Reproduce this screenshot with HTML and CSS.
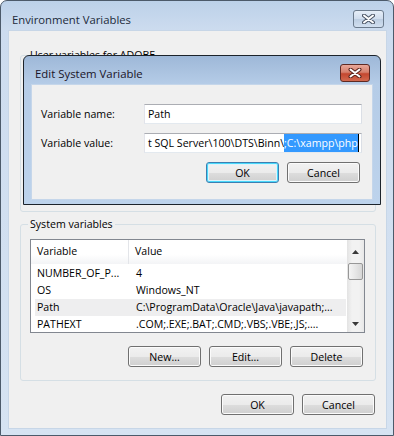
FILE: index.html
```html
<!DOCTYPE html>
<html lang="en">
<head>
  <meta charset="UTF-8">
  <title>Environment Variables</title>
  <link rel="stylesheet" href="styles.css">
</head>
<body>
  <div class="window">
    <div class="titlebar">
      <span class="title">Environment Variables</span>
      <span class="close">
        <svg width="13" height="10" viewBox="0 0 13 10"><path d="M2 1.5 L11 8.5 M11 1.5 L2 8.5" stroke="#4b5566" stroke-width="4" stroke-linecap="round"/><path d="M2 1.5 L11 8.5 M11 1.5 L2 8.5" stroke="#fff" stroke-width="2" stroke-linecap="round"/></svg>
      </span>
    </div>

    <div class="client">
      <div class="group user">
        <div class="group-label">User variables for ADOBE</div>
      </div>

      <div class="group system">
        <div class="group-label">System variables</div>
        <div class="list">
          <div class="table">
            <div class="head">
              <div class="hcell first">Variable</div>
              <div class="hcell">Value</div>
            </div>
            <div class="row"><span>NUMBER_OF_P...</span><span>4</span></div>
            <div class="row"><span>OS</span><span>Windows_NT</span></div>
            <div class="row sel"><span>Path</span><span>C:\ProgramData\Oracle\Java\javapath;...</span></div>
            <div class="row"><span>PATHEXT</span><span>.COM;.EXE;.BAT;.CMD;.VBS;.VBE;.JS;....</span></div>
          </div>
          <div class="scrollbar">
            <div class="arrow"><svg width="7" height="4" viewBox="0 0 7 4"><path d="M0 4 L3.5 0 L7 4 Z" fill="#3a3a3a"/></svg></div>
            <div class="thumb"></div>
            <div class="track"></div>
            <div class="arrow"><svg width="7" height="4" viewBox="0 0 7 4"><path d="M0 0 L7 0 L3.5 4 Z" fill="#3a3a3a"/></svg></div>
          </div>
        </div>
        <div class="buttons">
          <button class="btn">New...</button>
          <button class="btn">Edit...</button>
          <button class="btn">Delete</button>
        </div>
      </div>

      <div class="buttons bottom">
        <button class="btn">OK</button>
        <button class="btn">Cancel</button>
      </div>
    </div>

    <div class="dialog">
      <div class="dtitlebar">
        <span class="dtitle">Edit System Variable</span>
        <span class="dclose">
          <svg width="14" height="10" viewBox="0 0 14 10"><path d="M2.5 1.5 L11.5 8.5 M11.5 1.5 L2.5 8.5" stroke="#5a231b" stroke-width="4" stroke-linecap="round"/><path d="M2.5 1.5 L11.5 8.5 M11.5 1.5 L2.5 8.5" stroke="#fff" stroke-width="2" stroke-linecap="round"/></svg>
        </span>
      </div>
      <div class="dclient">
        <div class="field">
          <label>Variable name:</label>
          <div class="input">Path</div>
        </div>
        <div class="field">
          <label>Variable value:</label>
          <div class="input"><span>t SQL Server\100\DTS\Binn\</span><span class="selected">;C:\xampp\php</span><span class="caret"></span></div>
        </div>
        <div class="buttons dbuttons">
          <button class="btn default">OK</button>
          <button class="btn">Cancel</button>
        </div>
      </div>
    </div>
  </div>
</body>
</html>
```

FILE: styles.css
```css
* {
  box-sizing: border-box;
}

body {
  margin: 0;
  font-family: "Open Sans", "Noto Sans", sans-serif;
  font-size: 10.6px;
  color: #000;
  background: #fff;
}

.window {
  position: relative;
  width: 394px;
  height: 436px;
  border: 1px solid #4c5a6a;
  border-radius: 7px 7px 0 0;
  background: linear-gradient(#bcd1e9 0, #cddcef 30px, #d6e3f2 100%);
  padding: 0 6px 6px 7px;
  display: flex;
  flex-direction: column;
}

.titlebar {
  height: 29px;
  margin: 0 -6px 0 -7px;
  padding: 9px 9px 0 11px;
  display: flex;
  justify-content: space-between;
  align-items: flex-start;
}

.title {
  font-size: 11.3px;
  color: #1c2a3a;
  line-height: 19px;
}

.close {
  width: 31px;
  height: 18px;
  border: 1px solid #6b7a8c;
  border-radius: 3px;
  background: linear-gradient(#e6eef8, #cfdced 50%, #bccde2 51%, #d2e0f0);
  display: flex;
  align-items: center;
  justify-content: center;
}

.client {
  flex: 1;
  background: #f0f0f0;
  border: 1px solid #c7d6e7;
  padding: 0 10px 0 11px;
  display: flex;
  flex-direction: column;
}

.group {
  border: 1px solid #d5dfe5;
  border-radius: 3px;
  padding: 0 10px 13px 9px;
}

.group.user {
  margin-top: 24px;
  height: 157px;
}

.group.system {
  margin-top: 12px;
}

.group-label {
  width: fit-content;
  margin: -9px 0 0 -2px;
  padding: 0 2px;
  line-height: 16px;
  background: #f0f0f0;
}

.list {
  margin-top: 7px;
  height: 94px;
  border: 1px solid #828790;
  background: #fff;
  display: flex;
}

.table {
  flex: 1;
  overflow: hidden;
}

.head {
  height: 24px;
  display: flex;
  background: linear-gradient(#fff 60%, #f3f4f6);
}

.hcell {
  padding-left: 6px;
  line-height: 23px;
}

.hcell.first {
  width: 98px;
  border-right: 1px solid #e3e5e9;
}

.row {
  height: 17px;
  margin: 0 1px 0 4px;
  padding-left: 2px;
  display: grid;
  grid-template-columns: 99px 1fr;
  line-height: 17px;
  white-space: nowrap;
}

.row:nth-of-type(2) {
  margin-top: 1px;
}

.row.sel {
  background: #eeeeef;
}

.scrollbar {
  width: 17px;
  display: flex;
  flex-direction: column;
  background: linear-gradient(90deg, #e3e3e3, #f2f2f2 30%, #f2f2f2 70%, #e8e8e8);
}

.arrow {
  height: 23px;
  display: flex;
  align-items: center;
  justify-content: center;
}

.thumb {
  height: 17px;
  margin: 0 1px;
  border: 1px solid #979797;
  border-radius: 2px;
  background: linear-gradient(90deg, #f4f4f4, #e6e6e6 50%, #d6d6d6);
}

.track {
  flex: 1;
}

.scrollbar .arrow:last-child {
  height: 17px;
}

.buttons {
  display: flex;
  justify-content: flex-end;
  gap: 8px;
  margin-top: 13px;
  padding-right: 2px;
}

.buttons.bottom {
  padding-right: 1px;
}

.btn {
  width: 73px;
  height: 21px;
  padding: 0;
  font-family: inherit;
  font-size: 10.6px;
  color: #000;
  border: 1px solid #707070;
  border-radius: 3px;
  background: linear-gradient(#f2f2f2, #ebebeb 50%, #dddddd 51%, #cfcfcf);
  box-shadow: inset 0 0 0 1px #fbfbfb;
}

.btn.default {
  border-color: #3c7fb1;
  box-shadow: inset 0 0 0 1px #48d8fb, inset 0 0 0 2px #ddf3fb;
}

.dialog {
  position: absolute;
  left: 22px;
  top: 54px;
  width: 358px;
  height: 150px;
  border: 1px solid #1c232b;
  border-radius: 6px 6px 0 0;
  background: linear-gradient(#9eb8d8 0, #b5cce7 28px, #bdd3ec 100%);
  padding: 0 7px 4px 7px;
  display: flex;
  flex-direction: column;
}

.dtitlebar {
  height: 28px;
  margin: 0 -7px;
  padding: 8px 10px 0 11px;
  display: flex;
  justify-content: space-between;
  align-items: flex-start;
}

.dtitle {
  font-size: 11.4px;
  color: #1a1428;
  line-height: 20px;
}

.dclose {
  width: 30px;
  height: 18px;
  border: 1px solid #5e2a23;
  border-radius: 3px;
  background: linear-gradient(#e8a899, #d6806d 45%, #c4472f 55%, #d2694f);
  display: flex;
  align-items: center;
  justify-content: center;
}

.dclient {
  flex: 1;
  background: #f0f0f0;
  border: 1px solid #c5d6ea;
  padding: 19px 10px 0 9px;
}

.field {
  display: flex;
  align-items: center;
  height: 20px;
  margin-bottom: 9px;
}

.field label {
  width: 103px;
}

.input {
  width: 218px;
  height: 20px;
  border: 1px solid;
  border-color: #abadb3 #dbdfe6 #e3e9ef #e2e3ea;
  background: #fff;
  padding: 0 3px 0 3px;
  line-height: 18px;
  white-space: nowrap;
  overflow: hidden;
  display: flex;
}

.selected {
  background: #3399ff;
  color: #fff;
}

.caret {
  width: 1px;
  background: #000;
  flex: none;
}

.dbuttons {
  margin-top: 5px;
}
```
